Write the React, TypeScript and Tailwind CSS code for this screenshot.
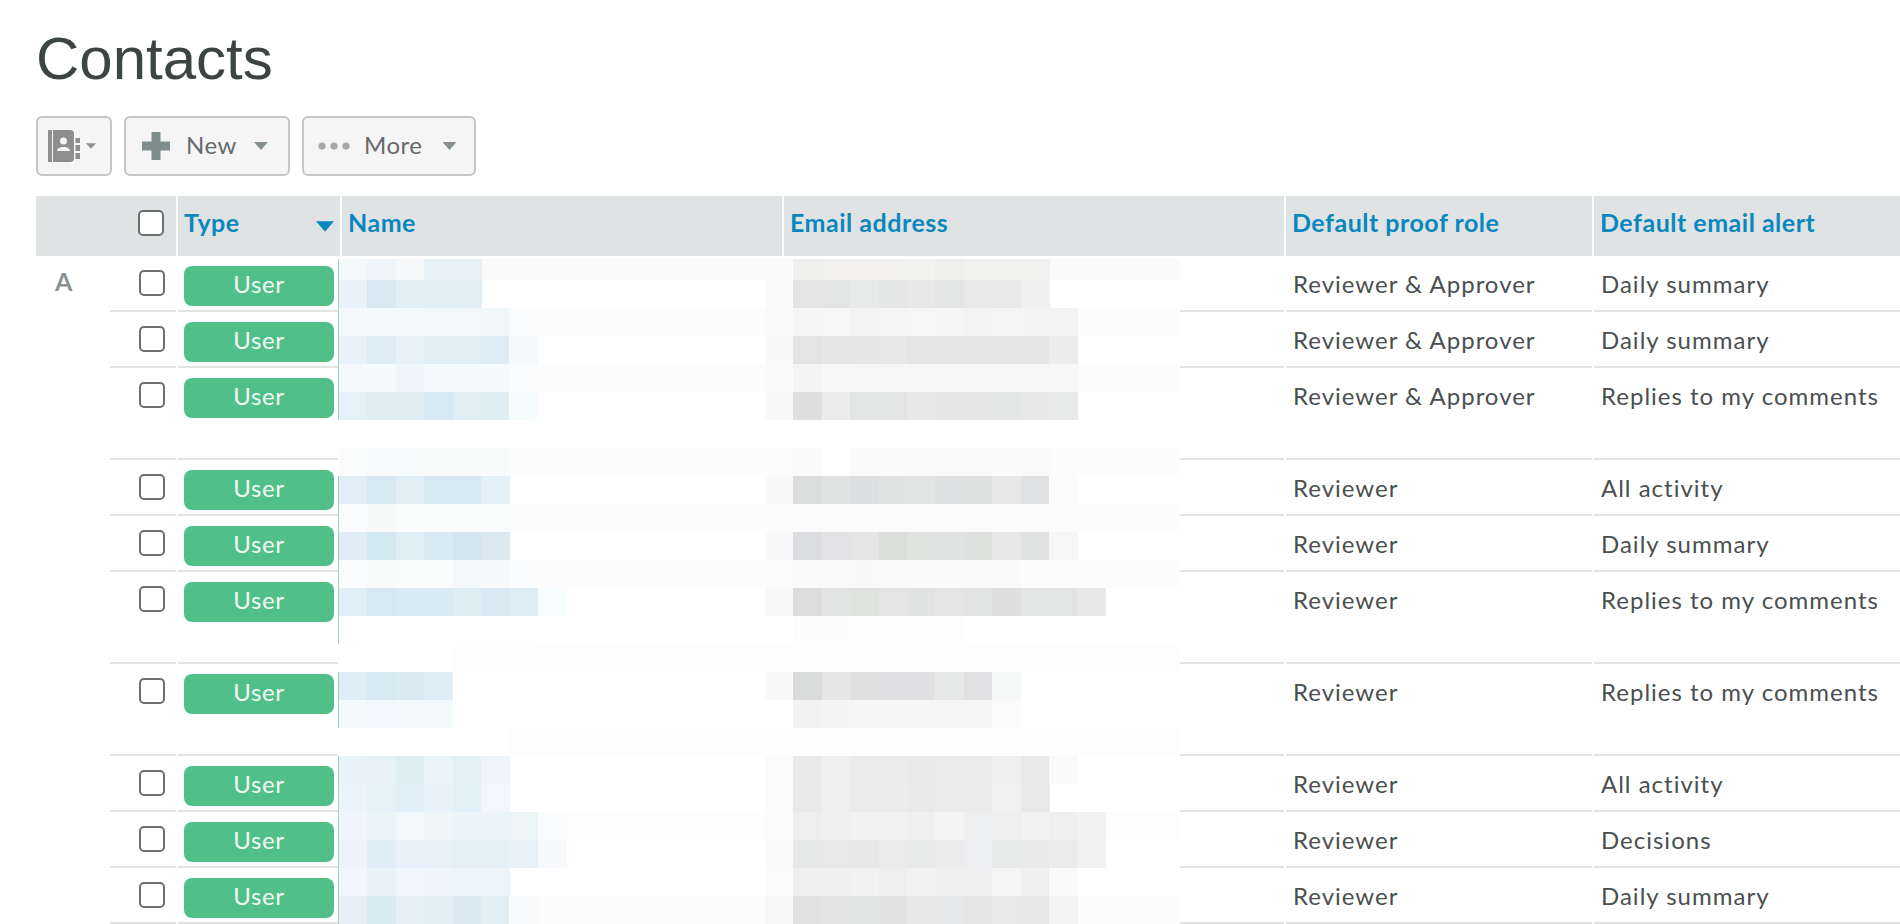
import React from 'react';

const contacts = [
  { role: 'Reviewer & Approver', alert: 'Daily summary', letter: 'A' },
  { role: 'Reviewer & Approver', alert: 'Daily summary' },
  { role: 'Reviewer & Approver', alert: 'Replies to my comments', tall: true },
  { role: 'Reviewer', alert: 'All activity' },
  { role: 'Reviewer', alert: 'Daily summary' },
  { role: 'Reviewer', alert: 'Replies to my comments', tall: true },
  { role: 'Reviewer', alert: 'Replies to my comments', tall: true },
  { role: 'Reviewer', alert: 'All activity' },
  { role: 'Reviewer', alert: 'Decisions' },
  { role: 'Reviewer', alert: 'Daily summary' },
];

// blurred-out names and addresses, one band per 28px of height
type Band = { y: number; h?: number; tint?: string; from?: number; side?: string; edge?: boolean; name?: string[]; mail?: string[] };

const bands: Band[] = [
  { y: 259, h: 21, tint: '#fafafa', side: '#fafafa', edge: true, name: ['#f5f9fb', '#eef4f7', '#f6f8f9', '#e9f2f6', '#e8f1f6'], mail: ['#f0f0ee', '#f2f1ef', '#f2f1ef', '#f2f1ef', '#f2f2f0', '#efefed', '#f1f1f0', '#f1f1f0', '#f1f1ef'] },
  { y: 280, side: '#fafafa', edge: true, name: ['#e8f2f8', '#d8e9f3', '#e1eef5', '#e1eef5', '#e1eef6'], mail: ['#e3e4e3', '#e3e4e4', '#e8e9e9', '#e5e6e6', '#e8e8e8', '#e4e5e5', '#e9e9e9', '#e9e9e9', '#f0f0f0'] },
  { y: 308, tint: '#fcfcfc', side: '#fafafa', edge: true, name: ['#f4f8fb', '#f3f8fb', '#f4f8fb', '#f3f7fa', '#f3f7fa', '#f1f6f9', '#f9fbfc'], mail: ['#f5f5f5', '#f6f6f6', '#f3f3f3', '#f5f5f5', '#f6f6f6', '#f5f5f5', '#f3f3f3', '#f5f5f5', '#f4f4f4', '#f3f3f3'] },
  { y: 336, side: '#f9f9f9', edge: true, name: ['#e9f2f9', '#deedf5', '#e6f2f8', '#e1eef6', '#e1eef6', '#deecf5', '#f7fafc'], mail: ['#e4e4e4', '#e7e7e7', '#e7e7e7', '#e8e8e8', '#e5e5e5', '#e5e5e5', '#e6e6e6', '#e6e6e6', '#e6e6e6', '#ececec'] },
  { y: 364, tint: '#fcfcfc', side: '#fafafa', edge: true, name: ['#f6f9fc', '#f7fafc', '#eef6fb', '#f5f9fc', '#f7fafc', '#f6fafc', '#fbfcfd'], mail: ['#f4f4f4', '#f7f7f7', '#f6f6f6', '#f6f6f6', '#f6f6f6', '#f6f6f6', '#f6f6f6', '#f6f6f6', '#f6f6f6', '#f7f7f7'] },
  { y: 392, side: '#f9f9f9', edge: true, name: ['#e5f1f8', '#e0edf5', '#e0edf5', '#d5e8f3', '#e2eff6', '#dfedf5', '#f6fbfd'], mail: ['#dfdfdf', '#ececec', '#e3e4e4', '#e3e4e4', '#e8e8e8', '#e6e6e6', '#e6e6e6', '#e5e6e6', '#e8e8e8', '#e9eaea'] },
  { y: 448, tint: '#fcfcfc', name: ['#fafcfc', '#f8fbfb', '#f8fbfb', '#f9fbfb', '#f9fbfb', '#f9fbfb'], mail: ['#fafafa', '#ffffff', '#fafafa', '#fafafa', '#fafafa', '#fafafa', '#fafafa', '#fafafa', '#fafafa'] },
  { y: 476, side: '#f9f9f9', edge: true, name: ['#e1eef6', '#d6e9f3', '#e1eef6', '#d6e9f3', '#d6e9f3', '#e3f0f8'], mail: ['#dbdddc', '#e1e3e2', '#dedfe1', '#e1e3e2', '#e2e4e3', '#dfe0e2', '#dfe1e0', '#e8e8e8', '#e0e1e3', '#fbfbfb'] },
  { y: 504, tint: '#fcfcfc', edge: true, name: ['#f9fbfc', '#f8fafa', '#fafbfb', '#fafbfb', '#fafbfb', '#fafbfb'], mail: ['#fbfbfb', '#fbfbfb', '#fbfbfb', '#fbfbfb', '#fbfbfb', '#fbfbfb', '#fbfbfb', '#fbfbfb', '#fbfbfb'] },
  { y: 532, side: '#f9f9f9', edge: true, name: ['#e1edf6', '#d3e9f2', '#e0eef5', '#d8eaf3', '#d3e6f1', '#dde9f0'], mail: ['#dcdde0', '#e3e3e6', '#e5e5e5', '#dcdedc', '#e0e2e0', '#e1e3e2', '#dfe1df', '#e8e8e8', '#e1e3e2', '#f6f6f6'] },
  { y: 560, tint: '#fcfcfc', edge: true, name: ['#f9fbfc', '#f9fbfb', '#fafcfc', '#fafcfc', '#f5f8fa', '#f7f9fb', '#fbfcfd'], mail: ['#fafafa', '#fafafa', '#f9f9f9', '#fafafa', '#fafafa', '#fafafa', '#fafafa', '#fafafa', '#fcfcfc'] },
  { y: 588, side: '#f8f8f8', edge: true, name: ['#e0eef6', '#d5e9f2', '#d9ebf4', '#d9ebf4', '#dfeef5', '#d9eaf4', '#deecf5', '#f7fdfe'], mail: ['#dcdcdc', '#e2e4e3', '#e0e2e0', '#e4e4e4', '#e0e3e1', '#e4e5e4', '#e2e4e3', '#dfdfdf', '#e3e5e4', '#e3e5e4', '#e8e8e8'] },
  { y: 616, edge: true, name: ['#fefefe', '#fefefe', '#fefefe', '#fefefe', '#fefefe', '#fefefe', '#fefefe'], mail: ['#fcfcfc', '#fcfcfc', '#fdfdfd', '#fdfdfd', '#fdfdfd', '#fdfdfd'] },
  { y: 644, tint: '#fdfdfd', from: 453 },
  { y: 672, side: '#f9f9f9', edge: true, name: ['#dfedf5', '#d7e9f3', '#daebf4', '#deedf6'], mail: ['#dadcdb', '#e6e6e6', '#e0e0e0', '#e0e0e2', '#e0e0e2', '#e7e9e8', '#e1e1e4', '#f5f8f7'] },
  { y: 700, edge: true, name: ['#f4fafc', '#f1f8fb', '#f2f9fb', '#f2f9fb'], mail: ['#f2f2f2', '#f4f4f4', '#f5f5f6', '#f5f5f6', '#f5f5f6', '#f5f5f5', '#f5f5f6', '#fbfbfb'] },
  { y: 728, tint: '#fdfdfd', from: 510 },
  { y: 756, side: '#fbfbfb', edge: true, name: ['#e7f3f8', '#e6f2f8', '#deeef5', '#e9f4f9', '#e3f0f7', '#eef4fc'], mail: ['#e9e9e9', '#efefef', '#ebebeb', '#ebebeb', '#e9e9e9', '#ebebeb', '#ebebeb', '#f0f0f0', '#e9e9e9', '#fafafa'] },
  { y: 784, side: '#fbfbfb', edge: true, name: ['#e9f4fb', '#e5f2f8', '#e1eff8', '#e8f2fa', '#e2f0f8', '#f1f7fb'], mail: ['#e9e9e9', '#efefef', '#ececec', '#ececec', '#eaeaea', '#ececec', '#ececec', '#f1f1f1', '#e9e9e9'] },
  { y: 812, tint: '#fdfdfd', side: '#fbfbfb', edge: true, name: ['#eef5fd', '#e9f4f6', '#f1f8fa', '#eff6f8', '#ebf4f6', '#ebf4f6', '#eef5f7', '#fafbfc'], mail: ['#eeeeee', '#f0f0f0', '#f2f2f2', '#f1f1f1', '#efefef', '#f4f4f4', '#eeeff1', '#efefef', '#f2f2f2', '#efefef', '#f2f2f2'] },
  { y: 840, side: '#fafafa', edge: true, name: ['#edf3fb', '#dfeef6', '#e8f1f9', '#e8f1f9', '#e4f0f7', '#e4f0f7', '#e8f1f9', '#f8f9fc'], mail: ['#e6e9e7', '#e9e9e9', '#e8e8e8', '#ebebeb', '#e9ebeb', '#ececec', '#eceef2', '#e7eae9', '#eaeaea', '#ebebeb', '#f1f1f1'] },
  { y: 868, tint: '#fefefe', side: '#fbfbfb', edge: true, name: ['#f0f6fd', '#e8f3f6', '#f0f7fa', '#eef6fc', '#ecf5f9', '#ecf5fa'], mail: ['#efefef', '#f0f0f0', '#f2f2f2', '#efefef', '#f2f2f2', '#f0f0f0', '#efefef', '#f5f5f5', '#f0f0f0', '#fafafa'] },
  { y: 896, tint: '#fcfcfc', side: '#f8f8f8', edge: true, name: ['#e6eff6', '#d8eaf2', '#e5eff6', '#e2eef5', '#dbeaf3', '#e2edf5', '#f9fafb'], mail: ['#e1e1e1', '#e3e3e3', '#e1e4e2', '#e2e2e2', '#e8e8e8', '#e6e8ea', '#e5e5e5', '#e9e9e9', '#e8e8e8', '#f3f3f3'] },
];

const PITCH = 28.4;
const LEFT = 339;
const RIGHT = 1180;

const Mosaic = () => (
  <svg className="absolute left-[338px] top-[259px]" width={RIGHT - 338} height={665} viewBox={`338 259 ${RIGHT - 338} 665`} shapeRendering="crispEdges" aria-hidden>
    <rect x={338} y={259} width={RIGHT - 338} height={665} fill="#ffffff" />
    {bands.map((b, i) => {
      const h = b.h ?? 28;
      return (
        <g key={i}>
          {b.tint && <rect x={b.from ?? LEFT} y={b.y} width={RIGHT - (b.from ?? LEFT)} height={h} fill={b.tint} />}
          {b.name?.map((c, k) => <rect key={k} x={LEFT + k * PITCH} y={b.y} width={PITCH + 0.5} height={h} fill={c} />)}
          {b.side && <rect x={LEFT + 15 * PITCH} y={b.y} width={PITCH} height={h} fill={b.side} />}
          {b.mail?.map((c, k) => <rect key={k} x={LEFT + (16 + k) * PITCH} y={b.y} width={PITCH + 0.5} height={h} fill={c} />)}
          {b.edge && <rect x={338} y={b.y} width={1} height={h} fill="#9dd8bd" />}
        </g>
      );
    })}
  </svg>
);

const Caret = ({ className }: { className: string }) => (
  <svg className={className} viewBox="0 0 14 8" aria-hidden>
    <path d="M0 0h14L7 8z" fill="currentColor" />
  </svg>
);

const BookIcon = () => (
  <svg className="h-[34px] w-[32px] text-[#8e8e8e]" viewBox="0 0 32 34" aria-hidden>
    <rect x="0" y="1" width="4" height="32" rx="0.5" fill="currentColor" />
    <path d="M5 1h17a4 4 0 0 1 4 4v24a4 4 0 0 1-4 4H5z" fill="currentColor" />
    <rect x="27.5" y="9" width="4.500" height="5" fill="currentColor" />
    <rect x="27.5" y="16" width="4.500" height="6" fill="currentColor" />
    <rect x="27.5" y="24" width="4.500" height="6" fill="currentColor" />
    <circle cx="15.5" cy="12" r="3.5" fill="#f5f5f5" />
    <path d="M9 22c0-3 3.500-4 6.500-4s6.500 1 6.500 4z" fill="#f5f5f5" />
  </svg>
);

const Checkbox = () => (
  <span className="block h-[26px] w-[26px] rounded-[5px] border-2 border-[#6b6f70] bg-white" />
);

const ToolButton = ({ className, children }: { className: string; children: React.ReactNode }) => (
  <button type="button" className={`flex h-[60px] items-center rounded-[6px] border-2 border-[#c6c6c6] bg-[#f5f5f5] text-[24px] leading-[24px] tracking-[0.5px] text-[#666a6a] ${className}`}>
    {children}
  </button>
);

const columns = 'grid grid-cols-[72px_66px_162px_440px_500px_306px_306px] gap-x-[2px]';

const HeaderCell = ({ children, className = '' }: { children?: React.ReactNode; className?: string }) => (
  <div className={`flex h-[60px] items-center bg-[#e0e3e4] pb-[6px] pl-[6px] text-[25px] font-bold tracking-[0.5px] text-[#0a87bd] ${className}`}>{children}</div>
);

export default function App() {
  return (
    <div className="relative h-[924px] w-[1900px] overflow-hidden bg-white font-['Lato',sans-serif]">
      <div className="pl-[36px]">
        <h1 className="pt-[26px] font-['Liberation_Sans',sans-serif] text-[60px] leading-[66px] font-normal text-[#3c4444]">Contacts</h1>
        <div className="mt-[24px] flex gap-[12px]">
          <ToolButton className="w-[76px] pl-[10px]">
            <BookIcon />
            <Caret className="ml-[6px] h-[6px] w-[10px] text-[#8c9492]" />
          </ToolButton>
          <ToolButton className="w-[166px] pl-[16px]">
            <svg className="h-[28px] w-[28px] text-[#7f8c8c]" viewBox="0 0 28 28" aria-hidden>
              <path d="M9.500 0h9v9.500H28v9h-9.500V28h-9v-9.500H0v-9h9.500z" fill="currentColor" />
            </svg>
            <span className="mb-[2px] ml-[16px]">New</span>
            <Caret className="ml-[17px] h-[8px] w-[14px] text-[#86908c]" />
          </ToolButton>
          <ToolButton className="w-[174px] pl-[14px]">
            <svg className="h-[8px] w-[32px] text-[#a8a8a8]" viewBox="0 0 32 8" aria-hidden>
              <circle cx="4" cy="4" r="3.6" fill="currentColor" />
              <circle cx="16" cy="4" r="3.6" fill="currentColor" />
              <circle cx="28" cy="4" r="3.6" fill="currentColor" />
            </svg>
            <span className="mb-[2px] ml-[14px]">More</span>
            <Caret className="ml-[20px] h-[8px] w-[15px] text-[#86908c]" />
          </ToolButton>
        </div>

        <div className={`mt-[20px] ${columns}`}>
          <HeaderCell className="col-span-2 justify-end pr-[12px]">
            <Checkbox />
          </HeaderCell>
          <HeaderCell className="justify-between pr-[6px]">
            Type
            <Caret className="mt-[6px] h-[11px] w-[18px] text-[#0a87bd]" />
          </HeaderCell>
          <HeaderCell>Name</HeaderCell>
          <HeaderCell className="pl-[5px]">Email address</HeaderCell>
          <HeaderCell>Default proof role</HeaderCell>
          <HeaderCell>Default email alert</HeaderCell>
        </div>

        {contacts.map((c, i) => {
          const height = c.tall ? 'h-[92px]' : 'h-[56px]';
          const line = 'border-b-2 border-[#e2e3e3]';
          return (
            <div key={i} className={`${columns} ${height}`}>
              <div className="pt-[9px] pl-[19px] text-[25px] leading-[32px] font-bold text-[#8a9291]">{c.letter}</div>
              <div className={`${line} pt-[14px] pl-[29px]`}>
                <Checkbox />
              </div>
              <div className={`${line} pt-[10px] pl-[6px]`}>
                <div className="flex h-[40px] w-[150px] items-center justify-center rounded-[8px] bg-[#50c088] pb-[4px] text-[24px] tracking-[0.6px] text-[#f2fbf6]">User</div>
              </div>
              <div className={line} />
              <div className={line} />
              <div className={`${line} pt-[2px] pl-[7px] text-[24px] leading-[52px] tracking-[1px] text-[#4a4f4f]`}>{c.role}</div>
              <div className={`${line} pt-[2px] pl-[7px] text-[24px] leading-[52px] tracking-[1px] text-[#4a4f4f]`}>{c.alert}</div>
            </div>
          );
        })}
      </div>
      <Mosaic />
    </div>
  );
}
